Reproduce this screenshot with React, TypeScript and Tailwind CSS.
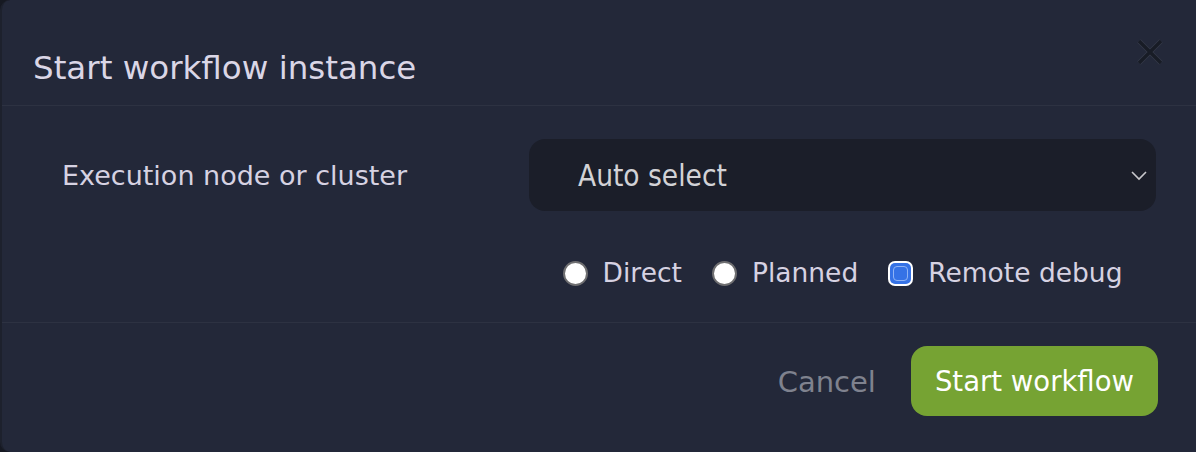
import React from "react";

const font = { fontFamily: '"DejaVu Sans", Verdana, sans-serif' };

function Radio({ label }: { label: string }) {
  return (
    <label className="flex items-center gap-[15px]">
      <span className="w-[25px] h-[25px] rounded-full bg-white border-2 border-[#6e6e70] box-border" />
      <span className="text-[26.5px] leading-[30px] text-[#d6d2e2]">{label}</span>
    </label>
  );
}

function CheckedRadio({ label }: { label: string }) {
  return (
    <label className="flex items-center gap-[15px]">
      <span className="w-[25px] h-[25px] rounded-[7px] bg-white p-[2px] box-border flex">
        <span className="flex-1 rounded-[5px] bg-[#3572e6] p-[3px] flex">
          <span className="flex-1 rounded-[4px] border border-[#8fb3f5]" />
        </span>
      </span>
      <span className="text-[26.5px] leading-[30px] text-[#d6d2e2]">{label}</span>
    </label>
  );
}

export default function App() {
  return (
    <div className="w-[1196px] h-[452px] bg-[#161922]" style={font}>
      <div className="relative w-full h-full bg-[#232839] rounded-l-[10px] border-l-2 border-[#1d212d] flex flex-col">
        <div className="h-[106px] border-b border-[#2d3242] pl-[31px] pt-[49px] box-border">
          <h1 className="text-[32.5px] leading-[38px] text-[#dad6e6] font-normal">Start workflow instance</h1>
        </div>
        <button className="absolute left-[1133px] top-[37px] w-[30px] h-[30px] flex items-center justify-center">
          <svg width="30" height="30" viewBox="0 0 30 30">
            <path d="M4 4 L26 26 M26 4 L4 26" stroke="#353a49" strokeWidth="5" strokeLinecap="butt" />
            <path d="M4 4 L26 26 M26 4 L4 26" stroke="#181c26" strokeWidth="3.4" strokeLinecap="butt" />
          </svg>
        </button>

        <div className="pl-[60px] pr-[40px] pt-[33px]">
          <div className="flex items-center">
            <div className="w-[467px] text-[27px] leading-[32px] text-[#d6d2e2] pt-[2px]">Execution node or cluster</div>
            <div className="flex-1 h-[72px] rounded-[16px] bg-[#1b1e29] flex items-center pl-[49px] pr-[8px] justify-between">
              <span className="text-[29.5px] leading-[34px] text-[#d2d2d6] font-stretch-condensed pt-[2px]">Auto select</span>
              <svg width="18" height="11" viewBox="0 0 18 11">
                <path d="M2 2 L9 9 L16 2" stroke="#c8c8cc" strokeWidth="1.6" fill="none" />
              </svg>
            </div>
          </div>
          <div className="flex">
            <div className="w-[467px]" />
            <div className="flex-1 flex justify-center gap-[30px] pt-[47px] pb-[34px]">
              <Radio label="Direct" />
              <Radio label="Planned" />
              <CheckedRadio label="Remote debug" />
            </div>
          </div>
        </div>

        <div className="border-t border-[#2d3242] flex justify-end items-center gap-[35px] pt-[23px] pr-[38px]">
          <button className="text-[29px] leading-[34px] text-[#7f828e] pt-[2px]">Cancel</button>
          <button className="h-[70px] px-[24px] rounded-[16px] bg-[#76a333] text-white text-[27.5px] leading-[32px]">Start workflow</button>
        </div>
      </div>
    </div>
  );
}
